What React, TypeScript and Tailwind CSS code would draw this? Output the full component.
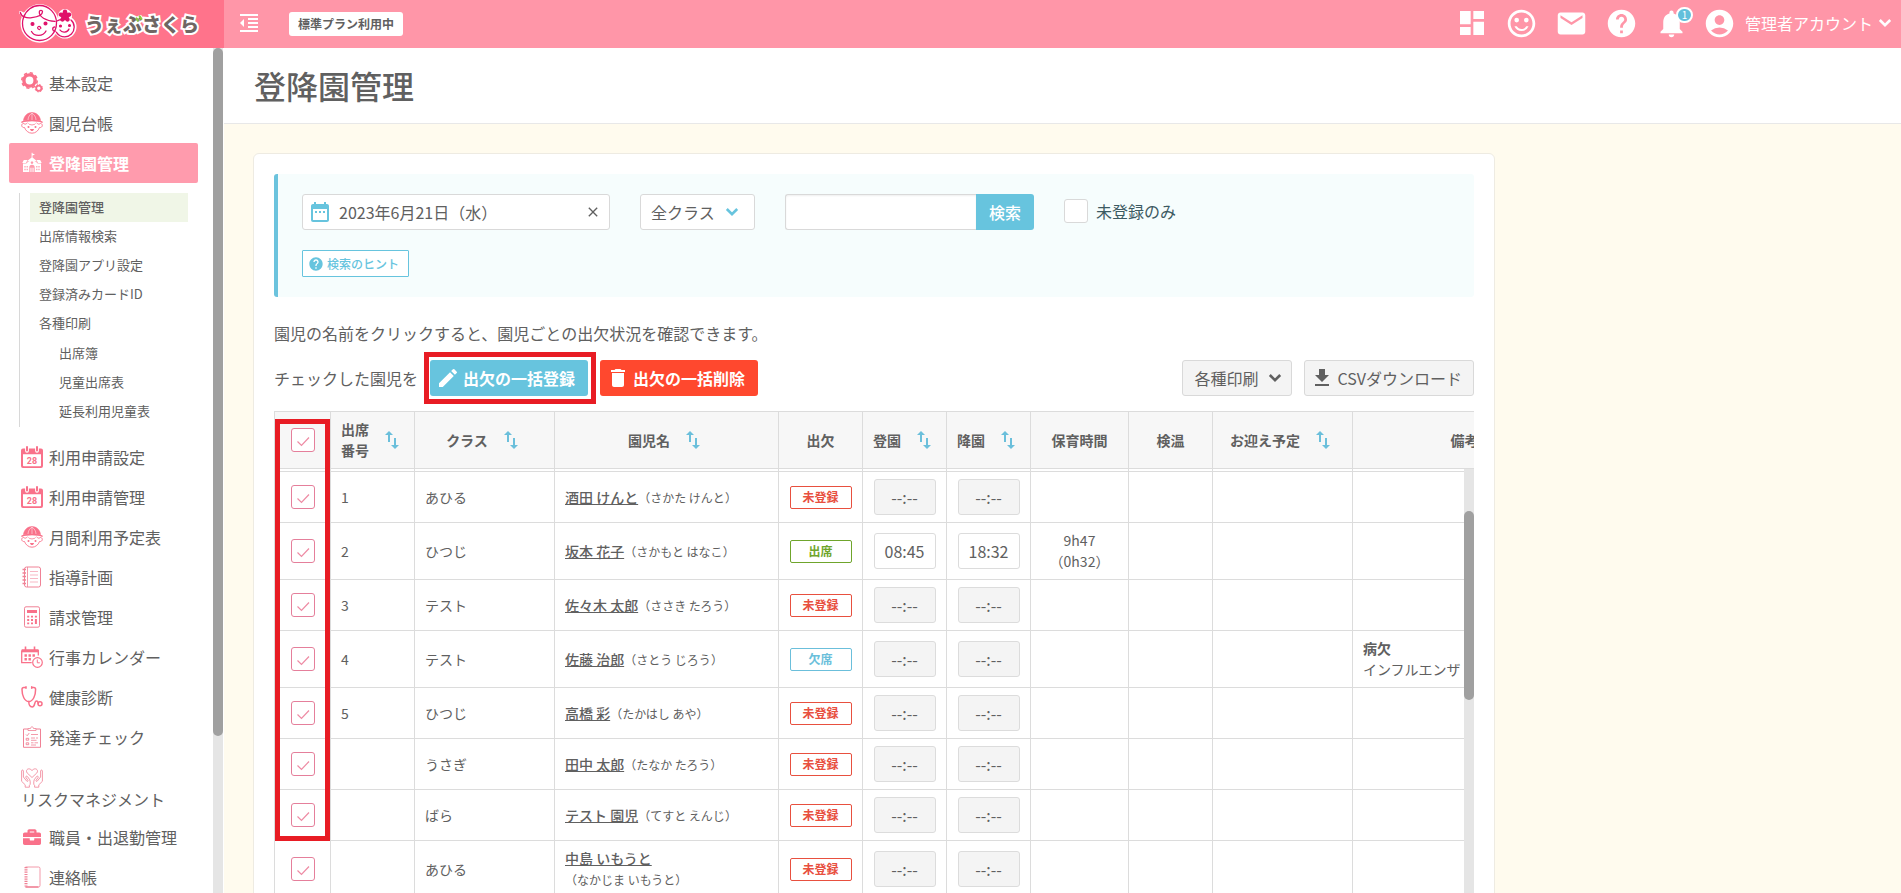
import React, { useState } from "react";
import {
  MdAccountCircle,
  MdClose,
  MdDashboard,
  MdDateRange,
  MdDelete,
  MdEdit,
  MdEmail,
  MdFormatIndentDecrease,
  MdHelp,
  MdNotifications,
  MdSwapVert,
} from "react-icons/md";
import { FaBriefcase } from "react-icons/fa";

type Status = "未登録" | "出席" | "欠席";

interface Child {
  no: string;
  className: string;
  name: string;
  kana: string;
  status: Status;
  arrive?: string;
  leave?: string;
  hours?: string[];
  note?: string[];
}

const children: Child[] = [
  { no: "1", className: "あひる", name: "酒田 けんと", kana: "さかた けんと", status: "未登録" },
  { no: "2", className: "ひつじ", name: "坂本 花子", kana: "さかもと はなこ", status: "出席", arrive: "08:45", leave: "18:32", hours: ["9h47", "（0h32）"] },
  { no: "3", className: "テスト", name: "佐々木 太郎", kana: "ささき たろう", status: "未登録" },
  { no: "4", className: "テスト", name: "佐藤 治郎", kana: "さとう じろう", status: "欠席", note: ["病欠", "インフルエンザ"] },
  { no: "5", className: "ひつじ", name: "高橋 彩", kana: "たかはし あや", status: "未登録" },
  { no: "", className: "うさぎ", name: "田中 太郎", kana: "たなか たろう", status: "未登録" },
  { no: "", className: "ばら", name: "テスト 園児", kana: "てすと えんじ", status: "未登録" },
  { no: "", className: "あひる", name: "中島 いもうと", kana: "なかじま いもうと", status: "未登録" },
];

const statusStyle: Record<Status, string> = {
  未登録: "border-[#e8503f] text-[#e8503f]",
  出席: "border-[#6fa52c] text-[#6fa52c]",
  欠席: "border-[#6bbfdb] text-[#6bbfdb]",
};

const columns = [
  { label: "クラス", sort: true, width: "w-[140px]" },
  { label: "園児名", sort: true, width: "w-[224px]" },
  { label: "出欠", sort: false, width: "w-[84px]" },
  { label: "登園", sort: true, width: "w-[84px]" },
  { label: "降園", sort: true, width: "w-[84px]" },
  { label: "保育時間", sort: false, width: "w-[98px]" },
  { label: "検温", sort: false, width: "w-[84px]" },
  { label: "お迎え予定", sort: true, width: "w-[140px]" },
  { label: "備考", sort: false, width: "w-[224px]" },
];

/* ---------- sidebar icons ---------- */

const GearsIcon = () => (
  <svg viewBox="0 0 22 22" className="size-[22px]" fill="none" stroke="#f9718a">
    <circle cx="8.5" cy="8.5" r="5.6" strokeWidth="3.4" />
    <circle cx="8.5" cy="8.5" r="7.7" strokeWidth="1.6" strokeDasharray="3.2 2.85" />
    <circle cx="17.8" cy="16.2" r="2.6" strokeWidth="1.8" />
    <circle cx="17.8" cy="16.2" r="3.700" strokeWidth="1" strokeDasharray="1.600 1.300" />
  </svg>
);

const ChildIcon = () => (
  <svg viewBox="0 0 22 22" className="size-[22px]" fill="none" stroke="#f9718a">
    <path d="M2.500 8.600C3 4 6.500.6 11 .6s8 3.400 8.500 8z" fill="#f9718a" strokeWidth=".6" />
    <path d="M1 10.200C3.500 8.800 7 8.600 11 8.600s7.500.2 10 1.600" strokeWidth="1.500" strokeLinecap="round" />
    <path d="M11 1v7M7 8c.2-3 1.500-5.400 4-6.800M15 8c-.2-3-1.500-5.400-4-6.800" stroke="#fff" strokeWidth=".5" />
    <path d="M3.500 11.500c-1.700-.3-2.800.6-2.800 1.900 0 1.400 1.300 2.400 2.800 2.100C4.700 18.800 7.500 21.200 11 21.200s6.300-2.400 7.500-5.700c1.500.3 2.800-.7 2.800-2.100 0-1.300-1.100-2.200-2.800-1.900" strokeWidth=".9" />
    <path d="M7.500 11.500c1 1.600 2.300.7 3.500 1.600 1.200-.9 2.500 0 3.500-1.600" strokeWidth=".8" />
    <path d="M3.500 12.500c1.200-.3 2.200-.8 3-1.700M18.500 12.500c-1.200-.3-2.200-.8-3-1.700" strokeWidth=".8" />
    <circle cx="7.500" cy="15" r="1" fill="#f9718a" stroke="none" />
    <circle cx="14.500" cy="15" r="1" fill="#f9718a" stroke="none" />
    <path d="M9 17h4c-.3 1.500-1.100 2-2 2s-1.700-.5-2-2z" fill="#f9718a" stroke="none" />
  </svg>
);

const SchoolIcon = () => (
  <svg viewBox="0 0 22 22" className="size-[22px]" fill="#fff">
    <path d="M10.600.8h.9v.7l2.500.9-2.500 1.200v1.900l4.700 3.700H5.900l4.700-3.700z" />
    <path d="M2.800 8h3.600L5 11H1.300zM15.600 8h3.600l1.500 3H17z" />
    <path fillRule="evenodd" d="M2 11.600h3.600V11L11 7.200l5.400 3.800v.6H20V20h-6.300v-4.500a2.700 2.700 0 00-5.400 0V20H2zm1.400 2.500v1.500h1.200v-1.500zm2.200 0v1.500h1.200v-1.500zm-2.200 2.600v1.500h1.200v-1.500zm2.200 0v1.500h1.200v-1.500zm9.600-2.600v1.500h1.200v-1.500zm2.200 0v1.500h1.200v-1.500zm-2.200 2.600v1.500h1.200v-1.500zm2.200 0v1.500h1.200v-1.500zM11 9.300a1.300 1.300 0 100 2.600 1.300 1.300 0 000-2.600z" />
    <path d="M9.300 15.800h1.300V20H9.300zM11.400 15.800h1.300V20h-1.300z" opacity=".8" />
  </svg>
);

const Calendar28Icon = () => (
  <svg viewBox="0 0 22 22" className="size-[22px]">
    <path fillRule="evenodd" fill="#f9718a" d="M2 2.500h18a2 2 0 012 2V20a2 2 0 01-2 2H2a2 2 0 01-2-2V4.500a2 2 0 012-2zm0 5.700V19.500a.8.8 0 00.8.8h16.400a.8.8 0 00.8-.8V8.200z" />
    <path d="M6 0v4.800M16 0v4.800" stroke="#fff" strokeWidth="3.800" strokeLinecap="round" />
    <path d="M6 1v3.500M16 1v3.500" stroke="#f9718a" strokeWidth="2" strokeLinecap="round" />
    <text x="11" y="17.500" textAnchor="middle" fontSize="9" fontWeight="700" fill="#f9718a" fontFamily="Roboto, sans-serif">28</text>
  </svg>
);

const PlanIcon = () => (
  <svg viewBox="0 0 22 22" className="size-[22px]" fill="none" stroke="#f08296">
    <rect x="3.500" y="1" width="16" height="20" rx="2" />
    <path d="M6.500 1v20" strokeWidth=".8" />
    <path d="M1.500 3.500h3.500M1.500 7h3.500M1.500 10.500h3.500M1.500 14h3.500M1.500 17.500h3.500" strokeWidth="1.300" />
    <path d="M9 5.500h8M9 9h8M9 12.500h8M9 16h8" strokeWidth=".7" strokeOpacity=".8" />
  </svg>
);

const CalculatorIcon = () => (
  <svg viewBox="0 0 22 22" className="size-[22px]" fill="none" stroke="#f08296">
    <rect x="3.500" y=".8" width="15" height="20.400" rx="1.500" />
    <rect x="6" y="4" width="10" height="3" fill="#f9718a" stroke="none" />
    <path d="M7.200 9.800v8.500M11 9.800v8.500" stroke="#f9718a" strokeWidth="2" strokeDasharray="1.800 1.500" />
    <path d="M14.900 9.800v1.800M14.900 13.100v5" stroke="#f9718a" strokeWidth="2" />
  </svg>
);

const EventIcon = () => (
  <svg viewBox="0 0 22 22" className="size-[22px]" fill="none" stroke="#f9718a">
    <path d="M.7 4.500h16.600v5M.7 4.500v12.200h10" strokeWidth="1.300" />
    <path d="M.7 4.800h16.600" strokeWidth="3" />
    <path d="M4.500.5v4M13.500.5v4" strokeWidth="1.600" />
    <path d="M3.500 9.500h11.500M3.500 13.300h7.500" strokeWidth="2.400" strokeDasharray="2.400 1.600" />
    <circle cx="16.500" cy="16.500" r="4.800" fill="#fff" strokeWidth="1.200" />
    <path d="M16.300 13.500v3.300h2.500" />
  </svg>
);

const StethoscopeIcon = () => (
  <svg viewBox="0 0 22 22" className="size-[22px]" fill="none" stroke="#f9718a" strokeWidth="1.500" strokeLinecap="round">
    <path d="M4.500 1.500H2.800C1.500 1.500 1 2.300 1 3.500c0 6 2.500 12 6.800 12s6.800-6 6.800-12c0-1.200-.5-2-1.800-2h-1.700" />
    <path d="M5 .8v1.500M10.700.8v1.500" />
    <path d="M7.800 15.600c0 3.400 1.200 5.400 3.400 5.400 3.300 0 1.700-6 4.400-6 1.500 0 1.300 1.500 1.700 2.500" />
    <circle cx="19" cy="17.800" r="2" />
  </svg>
);

const ChecklistIcon = () => (
  <svg viewBox="0 0 22 22" className="size-[22px]" fill="none" stroke="#f08296">
    <path d="M7 3H2.500v18.300h17V3H15" />
    <path d="M7 2.500h2.500c0-2.200 3-2.200 3 0H15v2H7z" strokeWidth=".8" />
    <path d="M5 8.500l1.200 1.200 2-2.600M5.200 12.300h2.500v1.900H5.200zM5.200 16.800h2.500v1.900H5.200z" strokeWidth=".9" />
    <path d="M10 8.500h7M10 12h4M15 12h2M10 14.300h5.500M10 16.800h2.500M13.500 16.800h3.500M10 19h5" strokeWidth=".8" />
  </svg>
);

const HandsIcon = () => (
  <svg viewBox="0 0 22 22" className="size-[22px]" fill="none" stroke="#f08296" strokeWidth=".8">
    <path d="M11 10.500L6.200 6C4.300 3.500 6.500 1 9.200 2.100L11 3.500l1.800-1.400c2.700-1.100 4.900 1.400 3 3.900z" />
    <path d="M.6 4c0-1.300 1.800-1.300 1.800 0v6l3.400 4.200c.9.6 1.600-.3 1-1.100L4.900 10.500c-.6-1 .6-1.900 1.500-1l2.400 3.300c.6 1.200.4 3 .4 4.500l-.8.900v2H4.200v-2.400L.6 14.300z" />
    <path d="M21.400 4c0-1.300-1.800-1.300-1.800 0v6l-3.400 4.200c-.9.6-1.600-.3-1-1.100l1.900-2.600c.6-1-.6-1.900-1.500-1l-2.400 3.300c-.6 1.200-.4 3-.4 4.500l.8.900v2h4.200v-2.400l3.600-3.500z" />
  </svg>
);

const NotebookIcon = () => (
  <svg viewBox="0 0 22 22" className="size-[22px]" fill="none" stroke="#f08296">
    <path d="M4.500 1h13a1.500 1.500 0 011.500 1.500v17a1.500 1.500 0 01-1.500 1.500h-13" strokeWidth=".8" />
    <path d="M5 1v19.500" strokeWidth="3" strokeDasharray="1.200 1.100" />
    <path d="M4.500 21h13" strokeWidth="1.400" />
  </svg>
);

const BriefcaseIcon = () => (
  <span className="flex size-[22px] items-center justify-center">
    <FaBriefcase className="size-[18px] text-[#f9718a]" />
  </span>
);

/* ---------- common icons ---------- */

const ChevronIcon: React.FC<{ className?: string }> = ({ className = "" }) => (
  <svg viewBox="0 0 24 24" className={`size-6 ${className}`} fill="none" stroke="currentColor" strokeWidth="2.600">
    <path d="M6.800 9l5.200 5.200L17.200 9" />
  </svg>
);

const SmileIcon = () => (
  <svg viewBox="0 0 24 24" className="size-[33px]" fill="currentColor">
    <circle cx="15.500" cy="9.500" r="1.700" />
    <circle cx="8.500" cy="9.500" r="1.700" />
    <path d="M11.990 2C6.470 2 2 6.480 2 12s4.470 10 9.990 10C17.520 22 22 17.520 22 12S17.520 2 11.990 2zM12 20c-4.420 0-8-3.580-8-8s3.580-8 8-8 8 3.580 8 8-3.580 8-8 8zm0-4c-1.480 0-2.750-.81-3.450-2H6.880a5.495 5.495 0 0010.240 0h-1.670c-.7 1.190-1.970 2-3.450 2z" />
  </svg>
);

const DownloadIcon = () => (
  <svg viewBox="0 0 24 24" className="size-6" fill="currentColor">
    <path d="M19 9h-4V3H9v6H5l7 7 7-7zM5 18v2h14v-2H5z" />
  </svg>
);

const Logo = () => (
  <a href="#" className="flex h-12 w-56 shrink-0 items-center bg-[#ff738b] pl-[18px]">
    <svg viewBox="0 0 60 44" className="h-[44px] w-[60px] shrink-0" fill="none" stroke="#e0116a" strokeWidth="1.300" strokeLinecap="round">
      <g fill="#fff" stroke="#fff" strokeWidth="4" strokeLinejoin="round">
        <circle cx="21.700" cy="21.500" r="17.200" />
        <circle cx="47" cy="25" r="9.500" />
        <circle cx="47" cy="14" r="5" />
        <path d="M2.500 10.500L6 15h6z" strokeWidth="3" />
      </g>
      <path d="M5.500 15.500C8 8 14.500 3.500 21.500 3.500c9.500 0 17 7.800 17 17.500s-7.500 17.500-17 17.500S4.500 31 4.500 21.500c0-2 .3-4 1-6z" />
      <path d="M2.300 10.500c.8 4 6 6 11.500 5.200 5.500-.8 10.700-3 10.700-6 0-1.900-3-1.900-3.200.2-.3 4.600 6.200 9 15.700 9.500" />
      <path d="M39 19c1.500-1 3.500-1.500 5.500-1.500M53 18c2 1.700 3.200 4.200 3.200 7 0 5.500-4.200 9.800-9.500 9.800-3.500 0-6.500-1.800-8.200-4.500" />
      <circle cx="14.500" cy="22" r="1.400" fill="#e0116a" />
      <circle cx="27.500" cy="21.500" r="1.400" fill="#e0116a" />
      <path d="M21.500 27.500c-2-.3-2.500-2.500-1-3s2.500 1 2.200 2M13.500 29.500c2.500 5 11.500 5.500 14.500-.5" />
      <circle cx="42.500" cy="24" r=".9" fill="#e0116a" />
      <circle cx="51.500" cy="23.500" r=".9" fill="#e0116a" />
      <path d="M42 28c2 3.200 7.500 2.700 9-1M36.500 25c-2.500.5-2.500 4.500.8 4.200" />
      <g fill="#e0116a" stroke="none">
        <ellipse cx="47" cy="10.800" rx="2.300" ry="3.300" />
        <ellipse cx="47" cy="10.800" rx="2.300" ry="3.300" transform="rotate(72 47 14)" />
        <ellipse cx="47" cy="10.800" rx="2.300" ry="3.300" transform="rotate(144 47 14)" />
        <ellipse cx="47" cy="10.800" rx="2.300" ry="3.300" transform="rotate(216 47 14)" />
        <ellipse cx="47" cy="10.800" rx="2.300" ry="3.300" transform="rotate(288 47 14)" />
      </g>
    </svg>
    <span className="relative ml-[7px] whitespace-nowrap text-[19px] font-black text-[#6f6663] [-webkit-text-stroke:4px_white] [paint-order:stroke_fill]">
      うぇぶさくら
      {/* green leaves on the third letter */}
      <svg viewBox="0 0 8 8" className="absolute top-[5px] left-[50px] size-2" fill="none" stroke="#8cc63f" strokeWidth="2.200" strokeLinecap="round">
        <path d="M1.500 3.500l1.200 2M4.800 1.500l1.500 2.300" />
      </svg>
    </span>
  </a>
);

/* ---------- sidebar ---------- */

const menuTop = [
  { label: "基本設定", Icon: GearsIcon },
  { label: "園児台帳", Icon: ChildIcon },
];

const subMenu = ["登降園管理", "出席情報検索", "登降園アプリ設定", "登録済みカードID", "各種印刷"];
const printMenu = ["出席簿", "児童出席表", "延長利用児童表"];

const menuBottom = [
  { label: "利用申請設定", Icon: Calendar28Icon },
  { label: "利用申請管理", Icon: Calendar28Icon },
  { label: "月間利用予定表", Icon: ChildIcon },
  { label: "指導計画", Icon: PlanIcon },
  { label: "請求管理", Icon: CalculatorIcon },
  { label: "行事カレンダー", Icon: EventIcon },
  { label: "健康診断", Icon: StethoscopeIcon },
  { label: "発達チェック", Icon: ChecklistIcon },
  { label: "リスクマネジメント", Icon: HandsIcon, stacked: true },
  { label: "職員・出退勤管理", Icon: BriefcaseIcon },
  { label: "連絡帳", Icon: NotebookIcon },
];

interface MenuItemProps {
  label: string;
  Icon: React.FC;
  active?: boolean;
  stacked?: boolean;
}

const MenuItem: React.FC<MenuItemProps> = ({ label, Icon, active, stacked }) => {
  if (stacked) {
    return (
      <a href="#" className="flex h-[60px] flex-col justify-center px-3 pt-px leading-5">
        <Icon />
        <span>{label}</span>
      </a>
    );
  }
  return (
    <a
      href="#"
      className={`flex h-10 items-center gap-[6px] rounded-[2px] px-3 ${
        active ? "bg-[#ff9bad] font-bold text-white" : ""
      }`}
    >
      <Icon />
      <span>{label}</span>
    </a>
  );
};

const Sidebar = () => (
  <aside className="flex w-56 shrink-0 overflow-hidden bg-white">
    <nav className="w-[213px] shrink-0 pt-[15px] pr-[15px] pl-[9px] text-base">
      {menuTop.map((m) => (
        <MenuItem key={m.label} {...m} />
      ))}
      <MenuItem label="登降園管理" Icon={SchoolIcon} active />
      <div className="mt-[10px] mb-[10px] ml-[10px] border-l border-[#d8d8d8] pr-[10px] pb-[2px] pl-[10px] text-[13px]">
        {subMenu.map((label, i) => (
          <a
            key={label}
            href="#"
            className={`flex h-[29px] items-center px-[9px] pb-px ${i === 0 ? "bg-[#f0f6e7] font-medium" : ""}`}
          >
            {label}
          </a>
        ))}
        {printMenu.map((label) => (
          <a key={label} href="#" className="flex h-[29px] items-center pl-[29px]">
            {label}
          </a>
        ))}
      </div>
      {menuBottom.map((m) => (
        <MenuItem key={m.label} {...m} />
      ))}
    </nav>
    <div className="w-[10px] shrink-0 bg-[#e5e5e5]">
      <div className="h-[688px] rounded-full bg-[#a0a0a0]" />
    </div>
  </aside>
);

/* ---------- header ---------- */

const Header = () => (
  <header className="flex h-12 shrink-0 items-center bg-[#ff96a8] text-white">
    <Logo />
    <div className="flex flex-1 items-center pb-[2px]">
      <button aria-label="メニューを閉じる" className="ml-[13px]">
        <MdFormatIndentDecrease className="size-6" />
      </button>
      <span className="mt-[2px] ml-7 flex h-6 items-center rounded-[3px] bg-white px-[9px] text-xs font-bold text-[#606060]">
        標準プラン利用中
      </span>
      <div className="ml-auto flex items-center gap-[17px]">
        <button aria-label="ダッシュボード"><MdDashboard className="size-8" /></button>
        <button aria-label="サポート"><SmileIcon /></button>
        <button aria-label="メール"><MdEmail className="size-[33px]" /></button>
        <button aria-label="ヘルプ"><MdHelp className="size-[33px]" /></button>
        <button aria-label="お知らせ" className="relative">
          <MdNotifications className="size-[33px]" />
          <span className="absolute top-0 left-[21px] flex h-4 w-[17px] items-center justify-center rounded-full border-2 border-white bg-[#62bfdb] text-[10px] leading-none">
            1
          </span>
        </button>
      </div>
      <button className="mr-1 ml-[15px] flex items-center text-base">
        <MdAccountCircle className="mr-[9px] size-[33px]" />
        管理者アカウント
        <ChevronIcon />
      </button>
    </div>
  </header>
);

/* ---------- attendance ---------- */

interface CheckProps {
  label: string;
  checked: boolean;
  onChange: () => void;
}

const Check: React.FC<CheckProps> = ({ label, checked, onChange }) => (
  <span className="relative mx-auto block size-6">
    <input
      type="checkbox"
      aria-label={label}
      checked={checked}
      onChange={onChange}
      className="block size-6 appearance-none rounded-[3px] border border-[#e57f9b] bg-white"
    />
    {checked && (
      <svg viewBox="0 0 24 24" className="pointer-events-none absolute inset-0 size-6" fill="none" stroke="#ee8ba4" strokeWidth="1.200">
        <path d="M6.500 13.500l4 4 7.500-8" />
      </svg>
    )}
  </span>
);

const SearchPanel = () => {
  const [date, setDate] = useState("2023年6月21日（水）");

  return (
    <form className="rounded-[3px] border-l-4 border-[#6bc3dd] bg-[#f6fdfd] px-6 py-5" onSubmit={(e) => e.preventDefault()}>
      <div className="flex items-center gap-[30px]">
        <div className="flex h-9 w-[308px] items-center rounded-[3px] border border-[#d9d9d9] bg-white pr-2 pl-[5px]">
          <MdDateRange className="size-6 shrink-0 text-[#67c4de]" />
          <input
            type="text"
            aria-label="日付"
            value={date}
            onChange={(e) => setDate(e.target.value)}
            className="ml-[7px] min-w-0 flex-1 text-base outline-none"
          />
          <button type="button" aria-label="クリア" onClick={() => setDate("")}>
            <MdClose className="size-4" />
          </button>
        </div>
        <div className="relative">
          <select aria-label="クラス" className="h-9 w-[115px] appearance-none rounded-[3px] border border-[#d9d9d9] bg-white pl-[10px] text-base">
            <option>全クラス</option>
            <option>あひる</option>
            <option>ひつじ</option>
          </select>
          <ChevronIcon className="pointer-events-none absolute top-[6px] right-[11px] text-[#67c4de]" />
        </div>
        <div className="flex">
          <input
            type="text"
            aria-label="キーワード"
            className="h-9 w-[191px] rounded-l-[3px] border border-r-0 border-[#d9d9d9] bg-white px-2 shadow-[inset_0_1px_2px_#0001] outline-none"
          />
          <button className="h-9 w-[58px] rounded-r-[3px] bg-[#67c4de] text-base font-medium text-white">検索</button>
        </div>
        <label className="flex items-center gap-2 pb-[2px] text-base text-[#3c5a62]">
          <input type="checkbox" className="size-6 appearance-none rounded-[3px] border border-[#d9d9d9] bg-white" />
          未登録のみ
        </label>
      </div>
      <button type="button" className="mt-5 flex h-[27px] items-center rounded-[1px] border border-[#67c4de] bg-white pr-[9px] pl-[5px] text-xs font-medium text-[#67c4de]">
        <MdHelp className="mr-[3px] size-4" />
        検索のヒント
      </button>
    </form>
  );
};

const TimeField: React.FC<{ label: string; value?: string }> = ({ label, value }) => (
  <input
    type="text"
    readOnly
    aria-label={label}
    value={value ?? "--:--"}
    className={`mx-auto block h-9 w-[62px] rounded-[3px] border border-[#dcdcdc] text-center text-base outline-none ${
      value ? "bg-white" : "bg-[#f4f4f4]"
    }`}
  />
);

const AttendanceTable = () => {
  const [checked, setChecked] = useState<boolean[]>(children.map(() => true));
  const allChecked = checked.every(Boolean);

  const toggle = (index: number) => {
    setChecked(checked.map((c, i) => (i === index ? !c : c)));
  };

  const th = "border-r border-b border-t border-[#dcdcdc] bg-[#f7f7f7] px-[10px] py-[7px] font-bold";
  const td = "border-r border-b border-[#dcdcdc] px-[10px] py-[7px]";

  return (
    <div className="relative mt-[15px] overflow-hidden">
      <table className="w-[1303px] table-fixed border-separate border-spacing-0 border-l border-[#dcdcdc] text-sm leading-[21px]">
        <thead>
          <tr>
            <th className={`${th} w-14`}>
              <Check label="すべて選択" checked={allChecked} onChange={() => setChecked(children.map(() => !allChecked))} />
            </th>
            <th className={`${th} w-[84px]`}>
              <span className="flex items-center gap-[11px] text-left">
                <span className="w-7">出席番号</span>
                <MdSwapVert className="size-6 shrink-0 text-[#6bbfdb]" />
              </span>
            </th>
            {columns.map((c) => (
              <th key={c.label} className={`${th} ${c.width}`}>
                <span className="flex items-center justify-center gap-[11px] whitespace-nowrap">
                  {c.label}
                  {c.sort && <MdSwapVert className="size-6 shrink-0 text-[#6bbfdb]" />}
                </span>
              </th>
            ))}
          </tr>
        </thead>
        <tbody>
          {/* bottom edge of the row scrolled under the header */}
          <tr aria-hidden="true">
            {Array.from({ length: 11 }, (_, i) => (
              <td key={i} className="h-[3px] border-r border-b border-[#dcdcdc] p-0" />
            ))}
          </tr>
          {children.map((child, i) => (
            <tr key={child.name}>
              <td className={td}>
                <Check label={child.name} checked={checked[i]} onChange={() => toggle(i)} />
              </td>
              <td className={td}>{child.no}</td>
              <td className={td}>{child.className}</td>
              <td className={td}>
                <a href="#" className="inline-block font-medium underline">{child.name}</a>
                <span className="inline-block text-xs">（{child.kana}）</span>
              </td>
              <td className={td}>
                <span className={`mx-auto flex h-[23px] w-[62px] items-center justify-center rounded-[2px] border text-xs font-bold ${statusStyle[child.status]}`}>
                  {child.status}
                </span>
              </td>
              <td className={td}>
                <TimeField label={`${child.name} 登園`} value={child.arrive} />
              </td>
              <td className={td}>
                <TimeField label={`${child.name} 降園`} value={child.leave} />
              </td>
              <td className={`${td} text-center`}>
                {child.hours?.map((h) => <div key={h}>{h}</div>)}
              </td>
              <td className={td}></td>
              <td className={td}></td>
              <td className={td}>
                {child.note && (
                  <>
                    <div className="font-bold">{child.note[0]}</div>
                    <div>{child.note[1]}</div>
                  </>
                )}
              </td>
            </tr>
          ))}
        </tbody>
      </table>
      {/* scrollbar */}
      <div className="absolute top-[58px] right-0 bottom-0 w-[10px] bg-[#e5e5e5] pt-[42px]">
        <div className="h-[189px] rounded-full bg-[#a0a0a0]" />
      </div>
      {/* highlight frame around the check column */}
      <div className="pointer-events-none absolute top-2 left-px h-[422px] w-[55px] border-5 border-[#e81c24]" />
    </div>
  );
};

const App: React.FC = () => {
  return (
    <div className="flex h-screen flex-col overflow-hidden bg-[#fffbee] font-['Noto_Sans_CJK_JP',sans-serif] text-[#606060]">
      <Header />
      <div className="flex min-h-0 flex-1">
        <Sidebar />
        <main className="min-w-0 flex-1 overflow-hidden">
          <div className="flex h-[76px] items-center border-b border-[#e8e8e8] bg-white px-[30px] pb-[2px]">
            <h1 className="text-[32px] font-medium">登降園管理</h1>
          </div>
          <div className="px-[29px] pt-[29px]">
            <section className="max-w-[1242px] rounded-md border border-[#eeebe2] bg-white p-5">
              <SearchPanel />
              <p className="mt-6 text-base leading-6">
                園児の名前をクリックすると、園児ごとの出欠状況を確認できます。
              </p>
              <div className="mt-[15px] flex items-center text-base">
                <span>チェックした園児を</span>
                <div className="relative ml-3">
                  <button className="flex h-9 w-[158px] items-center gap-[3px] rounded-[3px] bg-[#67c4de] pl-[6px] font-bold text-white">
                    <MdEdit className="size-6" />
                    出欠の一括登録
                  </button>
                  <div className="pointer-events-none absolute -top-2 -right-2 -bottom-2 -left-[6px] border-5 border-[#e81c24]" />
                </div>
                <button className="ml-3 flex h-9 w-[158px] items-center gap-[3px] rounded-[3px] bg-[#ff482e] pl-[6px] font-bold text-white">
                  <MdDelete className="size-6" />
                  出欠の一括削除
                </button>
                <button className="ml-auto flex h-9 w-[110px] items-center rounded-[3px] border border-[#d9d9d9] bg-[#f4f4f4] pl-[11px]">
                  各種印刷
                  <ChevronIcon className="ml-1" />
                </button>
                <button className="ml-3 flex h-9 items-center gap-[3px] rounded-[3px] border border-[#d9d9d9] bg-[#f4f4f4] pr-[11px] pl-[5px]">
                  <DownloadIcon />
                  CSVダウンロード
                </button>
              </div>
              <AttendanceTable />
            </section>
          </div>
        </main>
      </div>
    </div>
  );
};

export default App;
